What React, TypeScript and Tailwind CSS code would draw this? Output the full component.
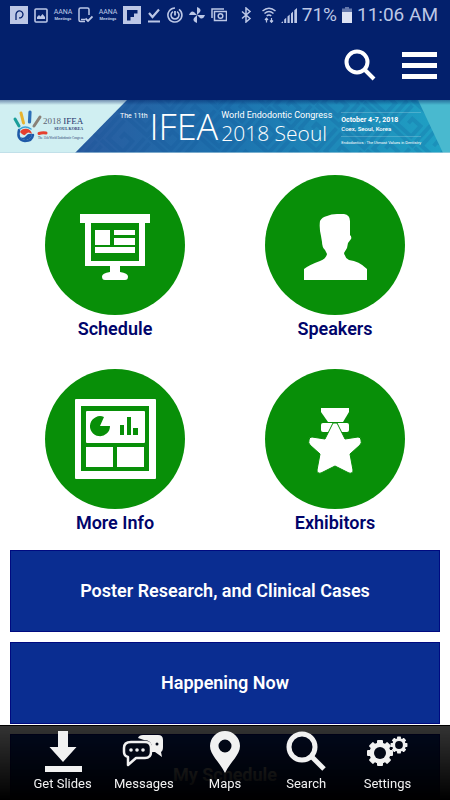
import type { ReactNode } from 'react'

const StatusBar = () => (
  <div className="flex h-[30px] items-center justify-between pl-[10px] pr-3 text-[#bcc7e6]">
    <div className="flex items-center gap-[6px]">
      <svg className="h-[18px] w-[18px]" viewBox="0 0 18 18" fill="none">
        <rect width="18" height="18" fill="currentColor" />
        <path d="M6 14V8.5a3.5 3.5 0 1 1 3 3.4" stroke="#03206c" strokeWidth="1.3" />
      </svg>
      <svg className="h-[15px] w-[14px]" viewBox="0 0 14 15" fill="none">
        <rect x="1" y="1" width="12" height="13" rx="1" stroke="currentColor" strokeWidth="1.6" />
        <path d="M3 11V9l2-2 1.500 1.500L8.500 6 11 9v2z" fill="currentColor" />
      </svg>
      <AanaMark />
      <svg className="h-4 w-[15px]" viewBox="0 0 15 16" fill="none" stroke="currentColor" strokeWidth="1.500">
        <path d="M7 14.500H2.500Q1 14.500 1 13V2.500Q1 1 2.500 1h7Q11 1 11 2.500V8" />
        <path d="M3 12.500h4" />
        <path d="M7.500 11.500l2.500 2.500 4.500-4.500" strokeWidth="1.800" />
      </svg>
      <AanaMark />
      <svg className="h-[18px] w-[18px]" viewBox="0 0 18 18">
        <rect width="18" height="18" fill="currentColor" />
        <path d="M4 4h10.500v3.500H11V11H7.500v3.500H4z" fill="#03206c" />
      </svg>
      <svg className="h-[15px] w-[14px]" viewBox="0 0 14 15" fill="none" stroke="currentColor" strokeWidth="2.200">
        <path d="M2 5l3.500 4L12 1.500" />
        <path d="M1 13.500h12" strokeWidth="2" />
      </svg>
      <svg className="h-4 w-4" viewBox="0 0 16 16" fill="none" stroke="currentColor" strokeWidth="1.600">
        <path d="M8 1a7 7 0 1 0 4 1.300" />
        <path d="M6 4.600a4 4 0 1 0 4 0" />
        <path d="M8 4v4.500" strokeWidth="1.800" />
      </svg>
      <svg className="h-4 w-4" viewBox="0 0 16 16" fill="currentColor">
        <path d="M8 8V0q5 2 3 5zM8 8h8q-2 5-5 3zM8 8v8q-5-2-3-5zM8 8H0q2-5 5-3z" />
      </svg>
      <svg className="h-[14px] w-4" viewBox="0 0 16 14" fill="none" stroke="currentColor" strokeWidth="1.500">
        <path d="M13 1H1v9" />
        <rect x="3.500" y="3.500" width="12" height="9" />
        <circle cx="9.500" cy="8" r="2.300" />
      </svg>
    </div>
    <div className="flex items-center gap-[5px]">
      <svg className="mr-[5px] h-4 w-3" viewBox="0 0 12 16" fill="none" stroke="currentColor" strokeWidth="1.500">
        <path d="M2 4.500l8 7-4 3.500V1l4 3.500-8 7" />
      </svg>
      <svg className="h-4 w-[14px]" viewBox="0 0 14 16" fill="none" stroke="currentColor" strokeWidth="1.500">
        <path d="M0.500 4q6.500-5.500 13 0M2.500 6.500q4.500-4 9 0M4.700 8.800q2.300-1.800 4.600 0" />
        <path d="M4.500 15.500v-4M3 13l1.500-1.800L6 13M9.500 11v4M8 13.500l1.500 1.800 1.500-1.800" strokeWidth="1.200" />
      </svg>
      <svg className="h-[15px] w-4" viewBox="0 0 16 15" fill="currentColor">
        <path d="M0 15l2-1.800V15zM3.200 15v-3.500l2-1.800V15zM6.500 15V8.500l2.200-2V15zM10 15V5.500l2-2V15zM13.300 15V2.200L16 0v15z" />
      </svg>
      <span className="text-[19px] leading-6">71%</span>
      <svg className="h-4 w-[10px]" viewBox="0 0 10 16">
        <path d="M3 0h4v1.500h3V5H0V1.500h3z" fill="#6478ac" />
        <path d="M0 5h10v11H0z" fill="#dde3f3" />
      </svg>
      <span className="text-[19px] leading-6">11:06 AM</span>
    </div>
  </div>
)

const AanaMark = () => (
  <span className="flex w-[18px] flex-col items-center">
    <span className="text-[7px] leading-[7px]">AANA</span>
    <span className="text-[4px] font-bold leading-[5px]">Meetings</span>
  </span>
)

const Banner = () => (
  <a
    href="#congress"
    className="relative flex h-[53px] items-center overflow-hidden bg-[#d0eff2] text-white"
  >
    {/* Slanted backdrop with the maze pattern */}
    <svg className="absolute inset-0 h-full w-full" viewBox="0 0 450 53" preserveAspectRatio="none">
      <defs>
        <linearGradient id="sea" x1="0" x2="1">
          <stop offset="0" stopColor="#2a5b9f" />
          <stop offset="0.4" stopColor="#1d71ae" />
          <stop offset="1" stopColor="#1fa3c5" />
        </linearGradient>
        <linearGradient id="shade" x1="0" x2="0" y1="0" y2="1">
          <stop offset="0" stopColor="#001c60" stopOpacity="0.45" />
          <stop offset="1" stopColor="#001c60" stopOpacity="0" />
        </linearGradient>
        <pattern id="maze" width="34" height="34" patternUnits="userSpaceOnUse" patternTransform="rotate(42)">
          <path d="M4 0v24h20V10H13v6M31 0v30H0" fill="none" stroke="#0c4b92" strokeWidth="4" strokeOpacity="0.18" />
        </pattern>
      </defs>
      <path d="M127 0H450V53H75z" fill="url(#sea)" />
      <path d="M127 0H450V53H75z" fill="url(#maze)" />
      <path d="M418 0H450V53H443z" fill="#49b9cf" />
      <rect width="450" height="5" fill="url(#shade)" />
      <rect y="52" width="450" height="1" fill="#b8d5e3" fillOpacity="0.6" />
    </svg>
    <div className="relative flex w-[120px] shrink-0 items-center pl-3">
      <svg className="h-9 w-[38px] shrink-0" viewBox="0 0 38 36" fill="none" strokeLinecap="round">
        <path d="M3 10l4 7" stroke="#1a9e9a" strokeWidth="3" />
        <path d="M9 4l2.500 10" stroke="#e7b32e" strokeWidth="3" />
        <path d="M18 3l-.5 10" stroke="#2b6fb8" strokeWidth="3.200" />
        <path d="M28 8l-6 9" stroke="#8a8178" strokeWidth="3" />
        <path d="M27 24.500q3-1 7-.5" stroke="#e5402f" strokeWidth="3" />
        <path d="M8 23a6.500 6.500 0 0 1 12 2q-4-3-6 0t-6-2z" fill="#e5402f" />
        <path d="M20 25a6.500 6.500 0 0 1-12 3q4 2 6-1t6-2z" fill="#1f5aa8" />
        <path d="M7 21q-2.500 10 6 11 7 0 8-6" stroke="#1f5aa8" strokeWidth="2.500" />
        <path d="M8 20q5-4 11 0" stroke="#3aa0d8" strokeWidth="1.500" />
      </svg>
      <div className="-ml-3 flex flex-col items-end whitespace-nowrap pt-1 font-['Liberation_Serif',serif] text-[#27376e]">
        <span className="text-[9px] leading-[9px]">
          <span className="text-[#5c6473]">2018</span> IFEA
        </span>
        <span className="text-[4px] font-bold leading-[6px]">SEOUL KOREA</span>
        <span className="pt-1 text-[3px] leading-[4px]">The 11th World Endodontic Congress</span>
      </div>
    </div>
    <div className="relative flex items-start whitespace-nowrap">
      <span className="pt-1 text-[7px] leading-[10px]">The 11th</span>
      <span className="ml-[2px] font-['Open_Sans',sans-serif] text-[36px] font-light leading-[40px]">IFEA</span>
      <div className="ml-[3px] flex flex-col pt-[3px]">
        <span className="text-[9px] leading-[11px]">World Endodontic Congress</span>
        <span className="font-['Open_Sans',sans-serif] text-[21px] font-light leading-[24px]">2018 Seoul</span>
      </div>
    </div>
    <div className="relative ml-[9px] mt-1 flex flex-col whitespace-nowrap">
      <span className="border-t border-white/20 pt-[3px] text-[7px] font-bold leading-[9px]">October 4-7, 2018</span>
      <span className="pb-[3px] text-[6px] font-medium leading-[8px]">Coex, Seoul, Korea</span>
      <span className="border-t border-white/20 pt-[3px] text-[4px] leading-[6px]">
        Endodontics : The Utmost Values in Dentistry
      </span>
    </div>
  </a>
)

// Drawn in a 140 unit box, the same as the disc behind them
const tiles: { label: string; icon: ReactNode }[] = [
  {
    label: 'Schedule',
    icon: (
      <>
        <path d="M35 39h70v9h-5v43H75v6q8 1 8 4.500T80 105H60q-3 0-3-3.500T65 97v-6H40V48h-5z" fill="#fff" />
        <path d="M46 48h48v38H46z" fill="#088f08" />
        <path d="M50 55h15v15H50zM69 55h21v5H69zM69 63h21v7H69zM50 72h40v6H50z" fill="#fff" />
      </>
    ),
  },
  {
    label: 'Speakers',
    icon: (
      <path
        d="M39 105V94Q44 90 55 86Q61 84 62 79L60 75Q57 72 57 67L56 61Q54 53 55 46Q57 42 62 41Q66 39 72 39H79Q85 40 85 46V60Q87 62 86 64L83 68L82 73L79 78Q80 83 84 85Q94 86 102 94V105z"
        fill="#fff"
      />
    ),
  },
  {
    label: 'More Info',
    icon: (
      <>
        <rect x="30" y="30" width="81" height="80" rx="1" fill="#fff" />
        <path d="M36 37h68v65H36z" fill="#088f08" />
        <rect x="41" y="42" width="59" height="32" rx="1" fill="#fff" />
        <path d="M41 78h27v20H41zM72 78h27v20H72z" fill="#fff" />
        <path d="M55 57L59 48A10 10 0 1 0 65 57zM75 56h4v10h-4zM82 48h4v18h-4zM88 59h5v7h-5z" fill="#088f08" />
      </>
    ),
  },
  {
    label: 'Exhibitors',
    icon: (
      <>
        <path d="M56 39h28v4l-6 10H63l-7-10z" fill="#fff" />
        <rect x="56" y="54" width="28" height="9" rx="2" fill="#fff" />
        <path
          d="M68 54h4l8 16 13-2q3 0 3 3 1 3-1 5L85 85l3 16q0 4-4 3l-14-7-14 7q-4 1-4-3l3-16-10-9q-2-2-1-5 0-3 3-3l13 2z"
          fill="#fff"
          stroke="#088f08"
          strokeWidth="1"
        />
      </>
    ),
  },
]

const sections = ['Poster Research, and Clinical Cases', 'Happening Now', 'My Schedule']

const Gear = ({ x, y, scale }: { x: number; y: number; scale: number }) => (
  <g transform={`translate(${x} ${y}) scale(${scale})`}>
    {[0, 45, 90, 135].map((angle) => (
      <rect key={angle} x="-3" y="-13" width="6" height="26" rx="1" transform={`rotate(${angle})`} />
    ))}
    <circle r="10.500" />
    <circle r="6" fill="#030816" />
  </g>
)

const navItems: { label: string; icon: ReactNode }[] = [
  {
    label: 'Get Slides',
    icon: <path d="M17 1h10v16h8.500L22 32 8.500 17H17zM4 36h37v6H4z" />,
  },
  {
    label: 'Messages',
    icon: (
      <>
        <path d="M16 8q1-3 5-3h15q5 0 5 5v7q0 4-2 5l1 5-7-5h-3v-4q0-8-8-8z" />
        <circle cx="35" cy="14" r="1.500" fill="#030816" />
        <path
          d="M9 12h14q6 0 6 6v4q0 6-6 6h-9l-8 7v-8q-4-1-4-5v-4q0-6 7-6z"
          fill="#030816"
          stroke="#f1f1f1"
          strokeWidth="2.500"
          strokeLinejoin="round"
        />
        <circle cx="9" cy="20" r="1.800" />
        <circle cx="15" cy="20" r="1.800" />
        <circle cx="21" cy="20" r="1.800" />
      </>
    ),
  },
  {
    label: 'Maps',
    icon: (
      <path
        fillRule="evenodd"
        d="M22 1a15 15 0 0 1 15 15c0 9-9 15-15 27C16 31 7 25 7 16A15 15 0 0 1 22 1zm0 8.500a6.500 6.500 0 1 0 0 13 6.500 6.500 0 0 0 0-13z"
      />
    ),
  },
  {
    label: 'Search',
    icon: (
      <g fill="none" stroke="#f1f1f1" strokeWidth="5">
        <circle cx="18" cy="17" r="13" />
        <path d="M27 26l13 13" />
      </g>
    ),
  },
  {
    label: 'Settings',
    icon: (
      <>
        <Gear x={15} y={23} scale={1} />
        <Gear x={34} y={15} scale={0.65} />
      </>
    ),
  },
]

const App = () => {
  return (
    <div className="flex h-screen flex-col overflow-hidden bg-white font-['Roboto',sans-serif]">
      <header className="shrink-0 bg-[#03206c]">
        <StatusBar />
        <div className="flex h-[70px] items-center justify-end gap-[26px] pr-[13px]">
          <button aria-label="Search">
            <svg className="h-8 w-8" viewBox="0 0 32 32" fill="none" stroke="#fff" strokeWidth="4">
              <circle cx="13" cy="13" r="10.500" />
              <path d="M20 20l10 10" />
            </svg>
          </button>
          <button aria-label="Menu" className="flex flex-col gap-[6px]">
            <span className="h-[5px] w-[35px] bg-white" />
            <span className="h-[5px] w-[35px] bg-white" />
            <span className="h-[5px] w-[35px] bg-white" />
          </button>
        </div>
      </header>

      <main className="min-h-0 flex-1 overflow-hidden">
        <Banner />

        <div className="grid grid-cols-2 gap-y-[26px] px-[5px] pt-[22px]">
          {tiles.map((tile) => (
            <button key={tile.label} className="flex flex-col items-center text-lg font-semibold leading-7 text-[#00046b]">
              <svg className="h-[140px] w-[140px] rounded-full bg-[#088f08]" viewBox="0 0 140 140">
                {tile.icon}
              </svg>
              {tile.label}
            </button>
          ))}
        </div>

        <div className="flex flex-col gap-[10px] px-[10px] pt-[13px]">
          {sections.map((section) => (
            <button
              key={section}
              className="h-[82px] border border-[#000a80] bg-[#0a2d91] text-lg font-semibold text-white"
            >
              {section}
            </button>
          ))}
        </div>
      </main>

      <nav className="fixed inset-x-0 bottom-0 flex border-t border-black bg-gradient-to-b from-black/80 to-black px-[22px] pb-[6px] pt-1">
        {navItems.map((item) => (
          <button key={item.label} className="flex flex-1 flex-col items-center text-[13px] leading-5 text-[#f1f1f1]">
            <svg className="h-11 w-11" viewBox="0 0 44 44" fill="#f1f1f1">
              {item.icon}
            </svg>
            {item.label}
          </button>
        ))}
      </nav>
    </div>
  )
}

export default App
